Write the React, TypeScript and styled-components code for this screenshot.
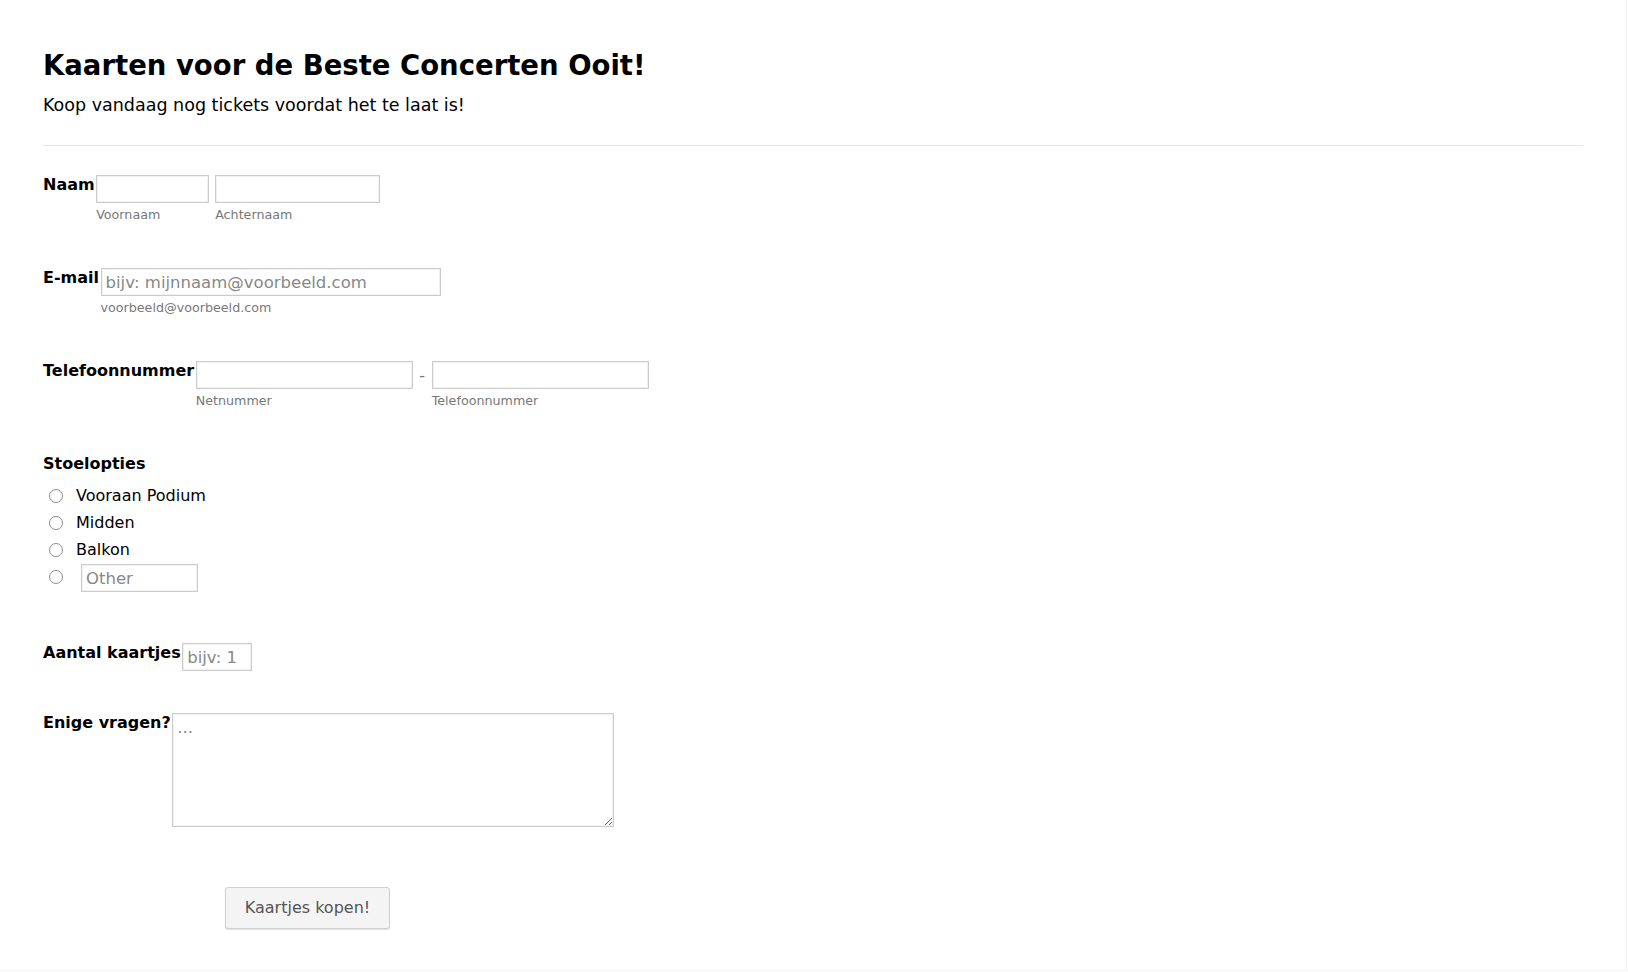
import React from 'react';
import styled, { createGlobalStyle } from 'styled-components';

const GlobalStyle = createGlobalStyle`
  body {
    margin: 0;
    background: #ffffff;
    font-family: "DejaVu Sans", Verdana, sans-serif;
    color: #000000;
  }
`;

// Outer page, faint edge on the right and bottom
const Page = styled.div`
  box-sizing: border-box;
  width: 1627px;
  min-height: 971px;
  padding: 49px 43px 0 43px;
  border-right: 1px solid #f4f4f4;
  border-bottom: 1px solid #f4f4f4;
`;

const Title = styled.h1`
  margin: 0;
  font-size: 27.5px;
  line-height: 32px;
  font-weight: bold;
`;

const Subtitle = styled.p`
  margin: 13.5px 0 0;
  font-size: 17.5px;
  line-height: 20px;
`;

const Divider = styled.hr`
  margin: 30.5px 0 0;
  border: 0;
  height: 1px;
  background: #e6e6e6;
`;

const FormList = styled.ul`
  list-style: none;
  margin: 0;
  padding: 0;
`;

// One question line: label followed by its field(s)
const Row = styled.li<{ $gap: number; $stacked?: boolean }>`
  display: flex;
  flex-direction: ${p => (p.$stacked ? 'column' : 'row')};
  align-items: flex-start;
  gap: ${p => (p.$stacked ? 0 : 1.5)}px;
  margin-top: ${p => p.$gap}px;
`;

const Label = styled.label`
  font-size: 16px;
  font-weight: bold;
  line-height: 18.6px;
  padding-top: 1px;
  white-space: nowrap;
`;

const FieldGroup = styled.div`
  display: flex;
  align-items: flex-start;
`;

const SubField = styled.div<{ $spacing?: number }>`
  display: flex;
  flex-direction: column;
  margin-right: ${p => p.$spacing ?? 0}px;
`;

const SubLabel = styled.span`
  margin-top: 5px;
  font-size: 12.7px;
  line-height: 14.5px;
  color: #777777;
`;

const TextInput = styled.input<{ $width: number }>`
  box-sizing: border-box;
  width: ${p => p.$width}px;
  height: 28px;
  margin: 0;
  padding: 2px 4px 0;
  border: 1px solid #cccccc;
  box-shadow: inset 0 0 0 1px #f1f1f1;
  border-radius: 0;
  background: #ffffff;
  font-family: "DejaVu Sans", Verdana, sans-serif;
  font-size: 16.5px;
  color: #333333;
  outline: none;

  &::placeholder {
    color: #888888;
  }
`;

const Dash = styled.span`
  width: 19px;
  line-height: 30px;
  text-align: center;
  font-size: 16px;
  color: #777777;
`;

const Options = styled.div`
  display: flex;
  flex-direction: column;
  margin-top: 8.5px;
`;

const Option = styled.label`
  display: flex;
  align-items: center;
  height: 27px;
  font-size: 16px;
  line-height: 18px;
`;

const OtherOption = styled.div`
  display: flex;
  align-items: flex-start;
  height: 29.5px;
`;

const Radio = styled.input.attrs({ type: 'radio' })<{ $top?: number }>`
  appearance: none;
  box-sizing: border-box;
  width: 14px;
  height: 14px;
  margin: ${p => p.$top ?? 0}px 13px 0 6px;
  border: 1px solid #8f8f8f;
  border-radius: 50%;
  background: #ffffff;
  flex-shrink: 0;
`;

const OtherInput = styled(TextInput)`
  margin: 0.5px 0 0 5px;
`;

const TextArea = styled.textarea`
  box-sizing: border-box;
  width: 442px;
  height: 114px;
  margin: 0;
  padding: 4px;
  border: 1px solid #cccccc;
  box-shadow: inset 0 0 0 1px #f1f1f1;
  font-family: "DejaVu Sans", Verdana, sans-serif;
  font-size: 16.5px;
  color: #333333;
  outline: none;

  &::placeholder {
    color: #888888;
  }
`;

const SubmitButton = styled.button`
  box-sizing: border-box;
  width: 165px;
  height: 42px;
  margin: 60px 0 0 182px;
  border: 1px solid #cfcfcf;
  border-radius: 3px;
  box-shadow: 0 1px 1px rgba(0, 0, 0, 0.12);
  background: #f4f4f4;
  font-family: "DejaVu Sans", Verdana, sans-serif;
  font-size: 16px;
  color: #555555;
`;

const seatOptions = ['Vooraan Podium', 'Midden', 'Balkon'];

const App: React.FC = () => (
  <>
    <GlobalStyle />
    <Page>
      <header>
        <Title>Kaarten voor de Beste Concerten Ooit!</Title>
        <Subtitle>Koop vandaag nog tickets voordat het te laat is!</Subtitle>
      </header>
      <Divider />

      <FormList>
        <Row $gap={29}>
          <Label>Naam</Label>
          <FieldGroup>
            <SubField $spacing={6}>
              <TextInput $width={113} />
              <SubLabel>Voornaam</SubLabel>
            </SubField>
            <SubField>
              <TextInput $width={165} />
              <SubLabel>Achternaam</SubLabel>
            </SubField>
          </FieldGroup>
        </Row>

        <Row $gap={45}>
          <Label>E-mail</Label>
          <SubField>
            <TextInput $width={340} placeholder="bijv: mijnnaam@voorbeeld.com" />
            <SubLabel>voorbeeld@voorbeeld.com</SubLabel>
          </SubField>
        </Row>

        <Row $gap={45.5}>
          <Label>Telefoonnummer</Label>
          <FieldGroup>
            <SubField>
              <TextInput $width={217} />
              <SubLabel>Netnummer</SubLabel>
            </SubField>
            <Dash>-</Dash>
            <SubField>
              <TextInput $width={217} />
              <SubLabel>Telefoonnummer</SubLabel>
            </SubField>
          </FieldGroup>
        </Row>

        <Row $gap={46} $stacked>
          <Label>Stoelopties</Label>
          <Options>
            {seatOptions.map(option => (
              <Option key={option}>
                <Radio name="seat" />
                {option}
              </Option>
            ))}
            <OtherOption>
              <Radio name="seat" $top={6.5} />
              <OtherInput $width={117} placeholder="Other" />
            </OtherOption>
          </Options>
        </Row>

        <Row $gap={50}>
          <Label>Aantal kaartjes</Label>
          <TextInput $width={70} placeholder="bijv: 1" />
        </Row>

        <Row $gap={42}>
          <Label>Enige vragen?</Label>
          <TextArea placeholder="..." />
        </Row>

        <li>
          <SubmitButton type="button">Kaartjes kopen!</SubmitButton>
        </li>
      </FormList>
    </Page>
  </>
);

export default App;
